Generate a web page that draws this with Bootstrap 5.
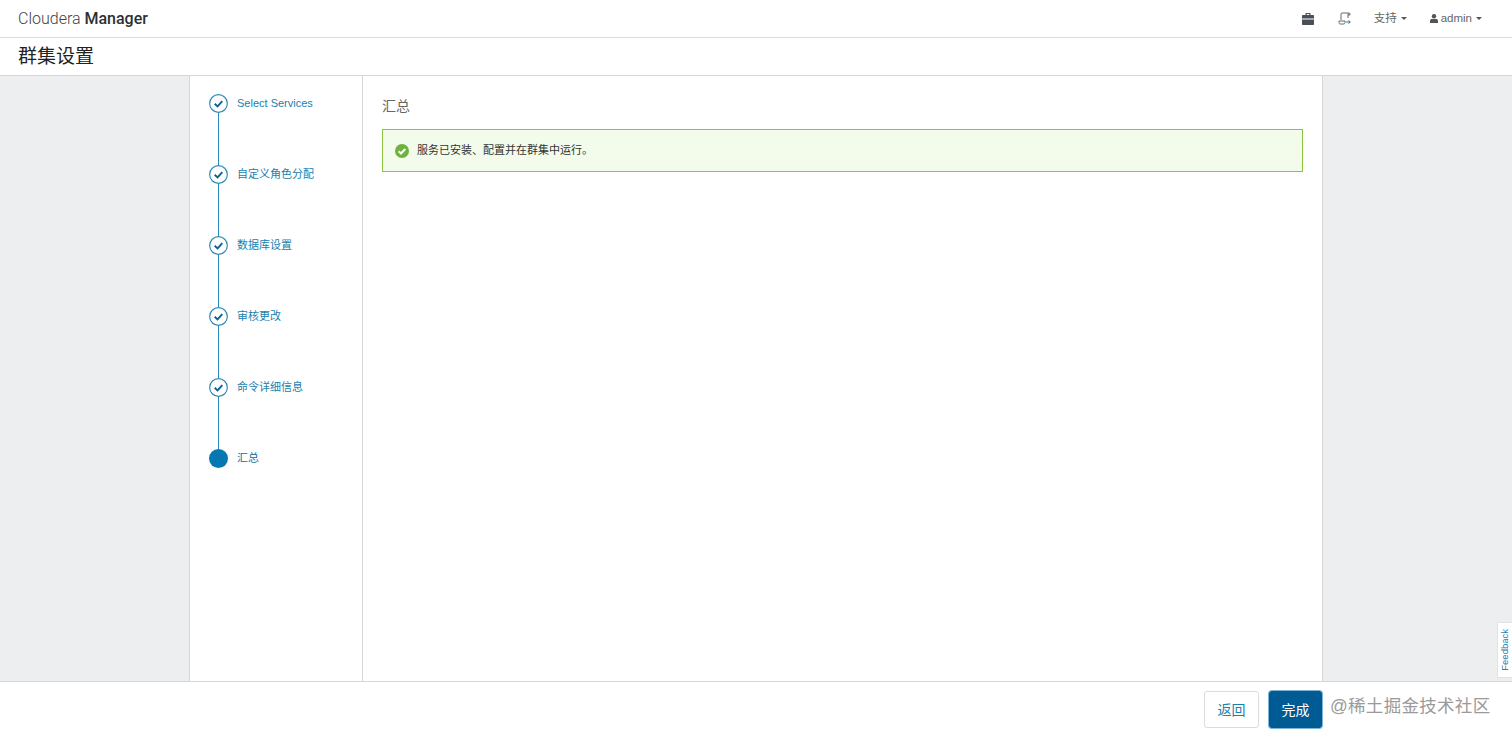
<!DOCTYPE html>
<html lang="zh">
<head>
<meta charset="utf-8">
<title>群集设置</title>
<link href="https://cdn.jsdelivr.net/npm/bootstrap@5.3.0/dist/css/bootstrap.min.css" rel="stylesheet">
<style>
html, body { height: 100%; overflow: hidden; }
body { font-family: "Liberation Sans", "Noto Sans CJK SC", sans-serif; font-size: 11px; color: #333; background: #fff; display: flex; flex-direction: column; }
.cm-top { height: 38px; border-bottom: 1px solid #dcdcdc; padding: 0 30px 0 18px; flex: none; }
.cm-brand { font-family: Roboto, "Liberation Sans", sans-serif; font-size: 16px; font-weight: 300; color: #444; }
.cm-brand b { font-weight: 500; color: #2c3035; }
.cm-tools { color: #666; font-size: 11.5px; }
.cm-ico { display: block; }
.cm-caret { display: inline-block; border-top: 3.5px solid #555; border-left: 3.5px solid transparent; border-right: 3.5px solid transparent; margin-left: 4px; vertical-align: middle; }
.cm-title { height: 38px; border-bottom: 1px solid #d6d6d6; padding: 2px 0 0 18px; font-size: 19px; color: #222; flex: none; }
.cm-main { flex: 1 1 0; min-height: 0; background: #eceef0; justify-content: center; }
.cm-wizard { width: 1134px; background: #fff; border-left: 1px solid #d6d6d6; border-right: 1px solid #d6d6d6; }
.cm-steps { width: 173px; flex: none; border-right: 1px solid #d6d6d6; padding: 18px 0 0 19px; }
.cm-step { height: 71px; gap: 9px; color: #1a80ad; font-size: 11px; position: relative; align-items: flex-start; }
.cm-step span { line-height: 20px; margin-top: -1px; }
.cm-step:not(:last-child)::after { content: ""; position: absolute; left: 9px; top: 19px; bottom: 0; width: 1px; background: #2a8dbd; }
.cm-step:last-child { color: #0f6f9f; }
.cm-dot { width: 19px; height: 19px; flex: none; display: block; }
.cm-body { padding: 21px 19px 0 19px; }
.cm-h { font-size: 14px; color: #666; line-height: 18px; margin-bottom: 14px; }
.cm-ok { height: 43px; background: #f3fbea; border: 1px solid #8cc63f; padding-left: 12px; gap: 8px; color: #333; font-size: 11px; }
.cm-foot { height: 57px; border-top: 1px solid #d6d6d6; flex: none; padding: 9px 190px 0 0; gap: 10px; justify-content: flex-end; align-items: flex-start; background: #fff; }
.cm-btn { height: 37px; padding: 0; font-size: 14px; border-radius: 3px; line-height: 1; }
.cm-back { width: 55px; color: #1a80ad; background: #fff; border: 1px solid #dcdcdc; }
.cm-done { width: 53px; color: #fff; background: #005a94; border: 1px solid #005a94; box-shadow: 0 0 0 1px #7fb4d6; }
.cm-mark { position: absolute; left: 1330px; top: 694px; font-size: 17.5px; line-height: 24px; color: #9a9a9a; letter-spacing: .3px; white-space: nowrap; }
.cm-fb { position: absolute; right: 0; top: 622px; width: 15px; height: 56px; background: #fff; border: 1px solid #e2e2e2; border-right: 0; color: #2b7cab; font-size: 9.5px; }
.cm-fb span { writing-mode: vertical-rl; transform: rotate(180deg); line-height: 1; }
.cm-gap-a { margin-right: 24px; }
.cm-gap-b { margin-right: 22px; }
.cm-gap-c { margin-right: 23px; }
.cm-user { margin-right: 3px; vertical-align: -1px; }
</style>
</head>
<body class="position-relative">
<header class="cm-top d-flex align-items-center justify-content-between">
  <div class="cm-brand">Cloudera <b>Manager</b></div>
  <div class="cm-tools d-flex align-items-center">
    <svg class="cm-ico cm-gap-a" width="12" height="13" viewBox="0 0 12 13"><path d="M3.500 3V1h5v2h2.500c.6 0 1 .4 1 1v2.500H0V4c0-.6.4-1 1-1zM4.700 2v1h2.600V2zM0 7.500h12V12c0 .6-.4 1-1 1H1c-.6 0-1-.4-1-1z" fill="#4a5058"/></svg>
    <svg class="cm-ico cm-gap-b" width="14" height="13" viewBox="0 0 14 13" fill="none" stroke="#666" stroke-width="1"><path d="M3 8V2c0-.7.5-1 1-1h7c.6 0 1 .4 1 1v1h-2M10.500 1.200C10 1.500 10 2 10 3v3"/><path d="M1 9h6v1.500c0 .8-.5 1.500-1.300 1.500H2.200C1.500 12 1 11.300 1 10.500z"/><path d="M8 10h4M10.500 8.500l1.800 1.500-1.800 1.500" stroke="#3a6f96"/></svg>
    <span class="cm-gap-c">支持<i class="cm-caret"></i></span>
    <span><svg class="cm-user" width="8" height="9" viewBox="0 0 8 9"><circle cx="4" cy="2.300" r="2.200" fill="#555"/><path d="M0 9V6.800C0 5.600 1 5 2 5h4c1 0 2 .6 2 1.800V9z" fill="#555"/></svg>admin<i class="cm-caret"></i></span>
  </div>
</header>
<div class="cm-title d-flex align-items-center">群集设置</div>
<main class="cm-main d-flex">
  <div class="cm-wizard d-flex">
    <nav class="cm-steps">
      <div class="cm-step d-flex"><svg class="cm-dot" viewBox="0 0 20 20"><circle cx="10" cy="10" r="9.300" fill="#fff" stroke="#2a87b5" stroke-width="1.200"/><path d="M6 10.200l3 2.800 5-5.500" fill="none" stroke="#0f5f93" stroke-width="2"/></svg><span>Select Services</span></div>
      <div class="cm-step d-flex"><svg class="cm-dot" viewBox="0 0 20 20"><circle cx="10" cy="10" r="9.300" fill="#fff" stroke="#2a87b5" stroke-width="1.200"/><path d="M6 10.200l3 2.800 5-5.500" fill="none" stroke="#0f5f93" stroke-width="2"/></svg><span>自定义角色分配</span></div>
      <div class="cm-step d-flex"><svg class="cm-dot" viewBox="0 0 20 20"><circle cx="10" cy="10" r="9.300" fill="#fff" stroke="#2a87b5" stroke-width="1.200"/><path d="M6 10.200l3 2.800 5-5.500" fill="none" stroke="#0f5f93" stroke-width="2"/></svg><span>数据库设置</span></div>
      <div class="cm-step d-flex"><svg class="cm-dot" viewBox="0 0 20 20"><circle cx="10" cy="10" r="9.300" fill="#fff" stroke="#2a87b5" stroke-width="1.200"/><path d="M6 10.200l3 2.800 5-5.500" fill="none" stroke="#0f5f93" stroke-width="2"/></svg><span>审核更改</span></div>
      <div class="cm-step d-flex"><svg class="cm-dot" viewBox="0 0 20 20"><circle cx="10" cy="10" r="9.300" fill="#fff" stroke="#2a87b5" stroke-width="1.200"/><path d="M6 10.200l3 2.800 5-5.500" fill="none" stroke="#0f5f93" stroke-width="2"/></svg><span>命令详细信息</span></div>
      <div class="cm-step d-flex"><svg class="cm-dot" viewBox="0 0 20 20"><circle cx="10" cy="10" r="10" fill="#0577b1"/></svg><span>汇总</span></div>
    </nav>
    <section class="cm-body flex-grow-1">
      <div class="cm-h">汇总</div>
      <div class="cm-ok d-flex align-items-center">
        <svg width="14" height="14" viewBox="0 0 14 14"><circle cx="7" cy="7" r="7" fill="#6db33f"/><path d="M3.700 7.200l2.300 2.300 4.300-4.500" fill="none" stroke="#fff" stroke-width="2"/></svg>
        <span>服务已安装、配置并在群集中运行。</span>
      </div>
    </section>
  </div>
</main>
<footer class="cm-foot d-flex">
  <button type="button" class="btn cm-btn cm-back">返回</button>
  <button type="button" class="btn cm-btn cm-done">完成</button>
</footer>
<div class="cm-mark">@稀土掘金技术社区</div>
<div class="cm-fb d-flex align-items-center justify-content-center"><span>Feedback</span></div>
<script src="https://cdn.jsdelivr.net/npm/bootstrap@5.3.0/dist/js/bootstrap.bundle.min.js"></script>
</body>
</html>
